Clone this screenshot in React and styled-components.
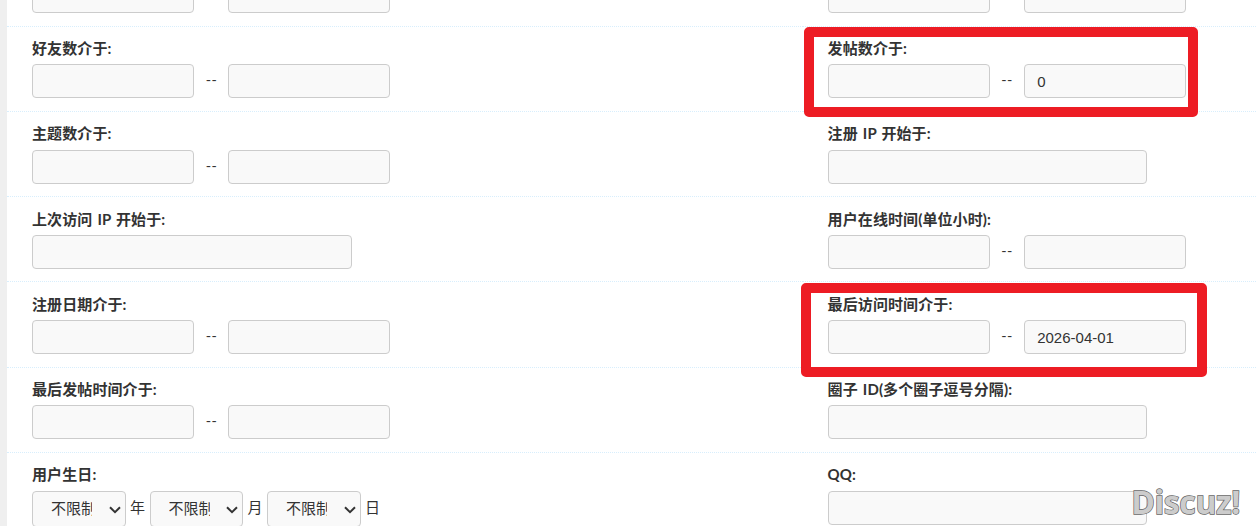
import React from 'react';
import styled, { createGlobalStyle } from 'styled-components';

const fields = [
    [{ label: '', type: 'range' }, { label: '', type: 'range' }],
    [{ label: '好友数介于:', type: 'range' }, { label: '发帖数介于:', type: 'range', to: '0' }],
    [{ label: '主题数介于:', type: 'range' }, { label: '注册 IP 开始于:', type: 'text' }],
    [{ label: '上次访问 IP 开始于:', type: 'text' }, { label: '用户在线时间(单位小时):', type: 'range' }],
    [{ label: '注册日期介于:', type: 'range' }, { label: '最后访问时间介于:', type: 'range', to: '2026-04-01' }],
    [{ label: '最后发帖时间介于:', type: 'range' }, { label: '圈子 ID(多个圈子逗号分隔):', type: 'text' }],
    [{ label: '用户生日:', type: 'birthday' }, { label: 'QQ:', type: 'text' }],
];

const DateSelect = () => (
    <SelectBox>
        <SelectText>不限制</SelectText>
        <Arrow viewBox="0 0 12 8">
            <path d="M1 1.3 L6 6.2 L11 1.3" />
        </Arrow>
    </SelectBox>
)

const Field = ({ label, type, to }) => (
    <Cell>
        <Label>{label}</Label>
        {type === 'range' && (
            <Controls>
                <Input $width={162} />
                <Dash>{label && '--'}</Dash>
                <Input $width={162} defaultValue={to} />
            </Controls>
        )}
        {type === 'text' && (
            <Controls>
                <Input $width={319.5} />
            </Controls>
        )}
        {type === 'birthday' && (
            <Controls>
                <DateSelect />
                <Unit>年</Unit>
                <DateSelect />
                <Unit>月</Unit>
                <DateSelect />
                <Unit>日</Unit>
            </Controls>
        )}
    </Cell>
)

const App = () => {
    return (
        <Container>
            <GlobalStyle />
            <Form>
                {fields.map(([left, right], index) => (
                    <Row key={index}>
                        <Field {...left} />
                        <Field {...right} />
                    </Row>
                ))}
            </Form>
            <Mark $left={804} $top={27} $width={394} $height={90} />
            <Mark $left={801} $top={283} $width={406} $height={94} />
            <Watermark>Discuz!</Watermark>
        </Container>
    )
}

export default App


const GlobalStyle = createGlobalStyle`
    * {
        box-sizing: border-box;
    }
    body {
        margin: 0;
        background: #fff;
    }
`

const Container = styled.div`
    position: relative;
    height: 526px;
    overflow: hidden;
    border-left: 7px solid #efefef;
    color: #333;
    font-family: "Open Sans", "Noto Sans CJK SC", sans-serif;
    font-size: 15px;
`

const Form = styled.div`
    margin-top: -58.6px;
`

const Row = styled.div`
    display: grid;
    grid-template-columns: 795.6px 1fr;
    height: 85.25px;
`

const Cell = styled.div`
    padding: 11.45px 0 0 25px;
    border-bottom: 1px dotted #d8eefc;
`

const Label = styled.div`
    height: 26.2px;
    line-height: 20px;
    font-family: Lato, "Noto Sans CJK SC", sans-serif;
    font-weight: 700;
    letter-spacing: 0.1px;
    word-spacing: 1.3px;
    white-space: nowrap;
`

const Controls = styled.div`
    display: flex;
`

const Input = styled.input`
    width: ${props => props.$width}px;
    height: 34px;
    padding: 0 12px 0 12.6px;
    border: 1px solid #ccc;
    border-radius: 4px;
    background: #f9f9f9;
    color: #333;
    font-family: "Liberation Sans", sans-serif;
    font-size: 15px;
    outline: none;
`

const Dash = styled.span`
    width: 34px;
    padding-left: 1.5px;
    line-height: 31px;
    text-align: center;
    letter-spacing: 1px;
`

const SelectBox = styled.div`
    display: flex;
    align-items: center;
    justify-content: space-between;
    width: 93.5px;
    height: 36px;
    padding: 0 4px 0 18px;
    border: 1px solid #ccc;
    border-radius: 4px;
    background: #f9f9f9;
`

const SelectText = styled.span`
    width: 41px;
    margin-bottom: 2px;
    overflow: hidden;
    white-space: nowrap;
    font-size: 15px;
    line-height: 32px;
`

const Arrow = styled.svg`
    width: 12px;
    height: 8px;
    margin-top: 2px;
    fill: none;
    stroke: #333;
    stroke-width: 2;
`

const Unit = styled.span`
    width: 24px;
    line-height: 32px;
    text-align: center;
`

const Mark = styled.div`
    position: absolute;
    left: ${props => props.$left - 7}px;
    top: ${props => props.$top}px;
    width: ${props => props.$width}px;
    height: ${props => props.$height}px;
    border: 10px solid #ed1c24;
    border-radius: 5px;
    pointer-events: none;
`

const Watermark = styled.div`
    position: absolute;
    right: 16px;
    bottom: 4px;
    color: #ccc;
    font-size: 32px;
    font-weight: 700;
    line-height: 40px;
    letter-spacing: -0.4px;
    -webkit-text-stroke: 1.4px #666;
    paint-order: stroke fill;
`
